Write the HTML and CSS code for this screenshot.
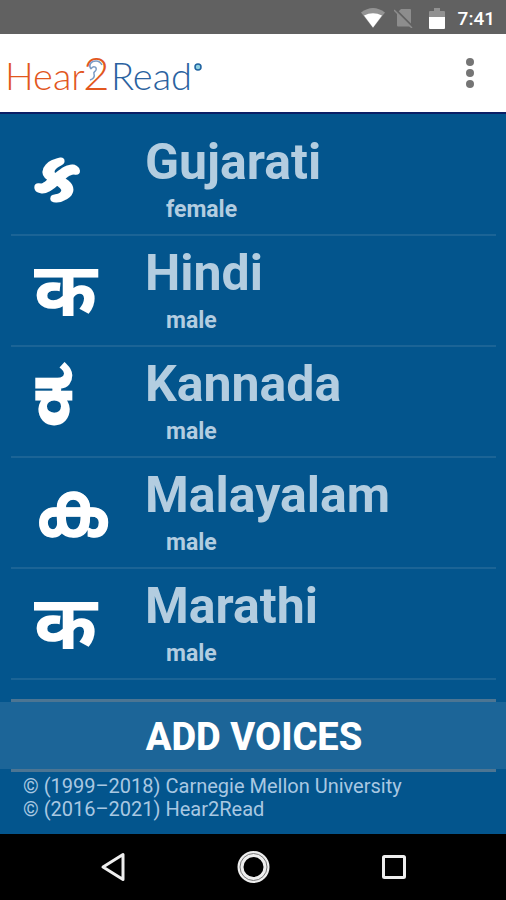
FILE: index.html
```html
<!DOCTYPE html>
<html lang="en">
<head>
    <meta charset="UTF-8">
    <meta name="viewport" content="width=device-width, initial-scale=1.0">
    <title>Hear2Read</title>
    <link rel="stylesheet" href="styles.css">
</head>
<body>
    <div class="status-bar">
        <svg class="wifi" width="24" height="20" viewBox="0 0 24 20">
            <path d="M0 4.500Q12-4.500 24 4.500L12 20z" fill="#939393"/>
            <path d="M3 7.500Q12 3 21 7.500L12 19.500z" fill="#fff"/>
        </svg>
        <svg class="no-sim" width="20" height="20" viewBox="0 0 20 20">
            <path d="M7 1h9q1 0 1 1v15.500q0 1-1 1H4q-1 0-1-1V5z" fill="#8d8d8d"/>
            <path d="M2 2l17 17" stroke="#616161" stroke-width="2"/>
            <path d="M0 2l18 18" stroke="#8d8d8d" stroke-width="1.500"/>
        </svg>
        <svg class="battery" width="16" height="21" viewBox="0 0 16 21">
            <path d="M5 0h6v3h4q1 0 1 1v6H0V4q0-1 1-1h4z" fill="#919191"/>
            <path d="M0 9h16v11q0 1-1 1H1q-1 0-1-1z" fill="#fff"/>
        </svg>
        <span class="clock">7:41</span>
    </div>

    <header>
        <a href="#" class="logo">
            <svg width="200" height="56" viewBox="0 0 200 56">
                <g class="logo-text">
                    <text class="orange" x="1" y="45">Hear</text>
                    <text class="orange big" x="79" y="45">2</text>
                    <text class="blue" x="107" y="45">Read</text>
                </g>
                <path d="M87 24c-3-4 0-8 5-8 4 0 5 2 6 4M87 24c2-4 6-2 5 1-1 2-3 2-2 4 1 3-1 5-4 6" fill="none" stroke="#7b9cc4" stroke-width="1.500"/>
                <circle cx="194" cy="22" r="3" fill="#8fd0e0" stroke="#1f62a0" stroke-width="1.500"/>
            </svg>
        </a>
        <button class="menu" aria-label="More options">
            <svg width="8" height="32" viewBox="0 0 8 32" fill="#757575">
                <circle cx="4" cy="5" r="4"/>
                <circle cx="4" cy="16" r="4"/>
                <circle cx="4" cy="27" r="4"/>
            </svg>
        </button>
    </header>

    <main>
        <ul class="voices">
            <li>
                <span class="letter heavy" lang="gu">ક</span>
                <div class="voice">
                    <h2>Gujarati</h2>
                    <p>female</p>
                </div>
            </li>
            <li>
                <span class="letter" lang="hi">क</span>
                <div class="voice">
                    <h2>Hindi</h2>
                    <p>male</p>
                </div>
            </li>
            <li>
                <span class="letter large" lang="kn">ಕ</span>
                <div class="voice">
                    <h2>Kannada</h2>
                    <p>male</p>
                </div>
            </li>
            <li>
                <span class="letter wide" lang="ml">ക</span>
                <div class="voice">
                    <h2>Malayalam</h2>
                    <p>male</p>
                </div>
            </li>
            <li>
                <span class="letter" lang="mr">क</span>
                <div class="voice">
                    <h2>Marathi</h2>
                    <p>male</p>
                </div>
            </li>
        </ul>

        <div class="line"></div>
        <button class="add-voices">ADD VOICES</button>
        <div class="line"></div>

        <footer>
            <p>© (1999–2018) Carnegie Mellon University</p>
            <p>© (2016–2021) Hear2Read</p>
        </footer>
    </main>

    <nav>
        <button aria-label="Back">
            <svg width="34" height="34" viewBox="0 0 34 34">
                <path d="M8 17L28 4.500v25z" fill="none" stroke="#eee" stroke-width="3" stroke-linejoin="round"/>
            </svg>
        </button>
        <button aria-label="Home">
            <svg width="34" height="34" viewBox="0 0 34 34" fill="none">
                <circle cx="17.500" cy="17" r="13" stroke="#eee" stroke-width="6"/>
                <circle cx="17.500" cy="17" r="13.500" stroke="#777" stroke-width="1"/>
            </svg>
        </button>
        <button aria-label="Recent apps">
            <svg width="34" height="34" viewBox="0 0 34 34">
                <rect x="6.500" y="6.500" width="21" height="21" rx="1" fill="none" stroke="#eee" stroke-width="3"/>
            </svg>
        </button>
    </nav>
</body>
</html>
```
FILE: styles.css
```css
* {
    box-sizing: border-box;
    margin: 0;
    padding: 0;
}
body {
    display: flex;
    flex-direction: column;
    min-height: 100vh;
    background-color: #03558d;
    font-family: Roboto, "Noto Sans", sans-serif;
}
button {
    background: none;
    border: none;
    cursor: pointer;
    font-family: inherit;
}
svg {
    display: block;
}
.status-bar {
    display: flex;
    justify-content: flex-end;
    align-items: center;
    height: 34px;
    padding: 2px 11px 0 0;
    background-color: #616161;
}
.no-sim {
    margin-left: 9px;
}
.battery {
    margin-left: 15px;
}
.clock {
    margin-left: 13px;
    color: white;
    font-size: 19px;
    font-weight: 500;
}
header {
    display: flex;
    justify-content: space-between;
    align-items: center;
    height: 80px;
    padding: 0 22px 0 4px;
    background-color: white;
    border-bottom: 2px solid #0b1f66;
}
.logo-text {
    font-family: Lato, sans-serif;
    font-size: 38px;
    font-weight: 300;
}
.logo-text .big {
    font-size: 46px;
}
.orange {
    fill: #e2571e;
}
.blue {
    fill: #2a62a0;
}
.menu {
    padding: 0 10px;
}
main {
    flex: 1;
    display: flex;
    flex-direction: column;
}
.voices {
    flex: 1;
    list-style: none;
    padding: 11px 10px 0 11px;
}
.voices li {
    display: flex;
    align-items: center;
    height: 111px;
    border-bottom: 2px solid #1b6496;
}
.letter {
    width: 134px;
    padding: 0 0 8px 23px;
    color: white;
    font-family: "Noto Sans", sans-serif;
    font-size: 76px;
    font-weight: bold;
    line-height: 80px;
}
.heavy {
    padding-left: 25px;
    font-size: 60px;
    -webkit-text-stroke: 5px white;
}
.large {
    padding-bottom: 28px;
    font-size: 88px;
    -webkit-text-stroke: 2px white;
}
.wide {
    padding-bottom: 14px;
    -webkit-text-stroke: 1px white;
}
.voice {
    color: #b3cde0;
}
.voice h2 {
    font-size: 50px;
    line-height: 60px;
}
.voice p {
    padding-left: 21px;
    font-size: 23px;
    font-weight: bold;
    line-height: 36px;
}
.line {
    height: 3px;
    margin: 0 10px 0 11px;
    background-color: #4c7593;
}
.add-voices {
    height: 67px;
    padding: 2px 0 0 2px;
    background-color: #1c6598;
    color: white;
    font-size: 38px;
    font-weight: 800;
}
footer {
    padding: 3px 23px 13px;
    color: #a9c8e2;
    font-size: 20px;
    line-height: 23px;
}
nav {
    display: flex;
    justify-content: center;
    align-items: center;
    gap: 107px;
    height: 66px;
    background-color: black;
}
```
